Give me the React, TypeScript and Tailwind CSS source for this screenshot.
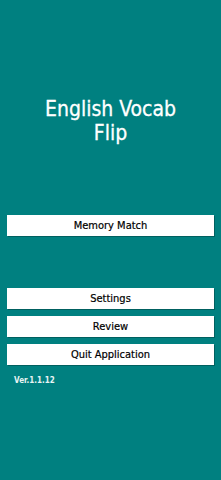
import React from "react";

const menuBtn =
  "h-[21px] w-full bg-white text-[11px] leading-[21px] text-black text-center shadow-[1px_1px_0_rgba(0,0,0,0.25)] [font-family:'DejaVu_Sans',sans-serif] [font-stretch:condensed] [-webkit-text-stroke:0.2px_black]";

export default function App() {
  return (
    <div className="flex h-[480px] w-full flex-col bg-[#008080] px-[7px] pt-[97px]">
      <h1 className="text-center text-[21px] leading-[24px] text-white [font-family:'DejaVu_Sans',sans-serif] [font-stretch:condensed] [-webkit-text-stroke:0.3px_white]">
        English Vocab
        <br />
        Flip
      </h1>

      <button className={`mt-[70px] ${menuBtn}`}>Memory Match</button>

      <div className="mt-[52px] flex flex-col gap-[7px]">
        <button className={menuBtn}>Settings</button>
        <button className={menuBtn}>Review</button>
        <button className={menuBtn}>Quit Application</button>
      </div>

      <p className="mt-[10px] pl-[7px] text-[8px] font-bold leading-[12px] text-[#e8f4f4] [font-family:'DejaVu_Sans',sans-serif] [font-stretch:condensed]">
        Ver.1.1.12
      </p>
    </div>
  );
}
